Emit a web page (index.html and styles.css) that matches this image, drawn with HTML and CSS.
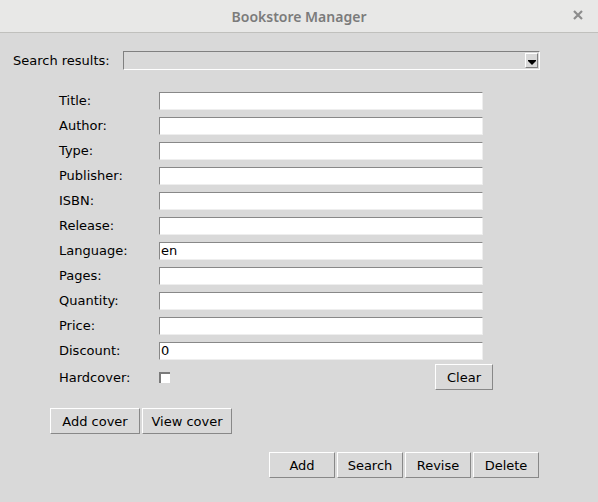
FILE: index.html
```html
<!DOCTYPE html>
<html lang="en">
<head>
  <meta charset="UTF-8" />
  <title>Bookstore Manager</title>
  <link rel="stylesheet" href="styles.css">
</head>
<body>

<div class="titlebar">
  <span class="title">Bookstore Manager</span>
  <svg class="close" width="12" height="12" viewBox="0 0 12 12">
    <path d="M2 2 L10 10 M10 2 L2 10" stroke="#8c8c8c" stroke-width="2.2" />
  </svg>
</div>

<div class="window">
  <div class="search-row">
    <span class="label">Search results:</span>
    <div class="combo">
      <div class="combo-btn"><span class="arrow"></span></div>
    </div>
  </div>

  <div class="form">
    <span class="label">Title:</span><input class="entry" type="text">
    <span class="label">Author:</span><input class="entry" type="text">
    <span class="label">Type:</span><input class="entry" type="text">
    <span class="label">Publisher:</span><input class="entry" type="text">
    <span class="label">ISBN:</span><input class="entry" type="text">
    <span class="label">Release:</span><input class="entry" type="text">
    <span class="label">Language:</span><input class="entry" type="text" value="en">
    <span class="label">Pages:</span><input class="entry" type="text">
    <span class="label">Quantity:</span><input class="entry" type="text">
    <span class="label">Price:</span><input class="entry" type="text">
    <span class="label">Discount:</span><input class="entry" type="text" value="0">
    <span class="label">Hardcover:</span>
    <div class="hard-row">
      <span class="check"></span>
      <button class="btn clear">Clear</button>
    </div>
  </div>

  <div class="cover-row">
    <button class="btn wide">Add cover</button>
    <button class="btn wide">View cover</button>
  </div>

  <div class="action-row">
    <button class="btn">Add</button>
    <button class="btn">Search</button>
    <button class="btn">Revise</button>
    <button class="btn">Delete</button>
  </div>
</div>

</body>
</html>
```

FILE: styles.css
```css
body {
  margin: 0;
  width: 598px;
  height: 502px;
  background: #d9d9d9;
  font-family: "DejaVu Sans", sans-serif;
  font-size: 13px;
  color: #000;
  overflow: hidden;
}

.titlebar {
  position: relative;
  height: 32px;
  background: #e8e8e7;
  border-bottom: 1px solid #c0c0bd;
  display: flex;
  align-items: center;
  justify-content: center;
}

.title {
  font-family: "Noto Sans", sans-serif;
  font-weight: 600;
  font-size: 14px;
  color: #7b7b7b;
}

.close {
  position: absolute;
  right: 14px;
  top: 9px;
}

.window {
  display: flex;
  flex-direction: column;
}

.search-row {
  display: flex;
  align-items: center;
  margin-top: 18px;
  padding-left: 13px;
}

.search-row .label {
  width: 110px;
}

.combo {
  width: 415px;
  height: 17px;
  border-top: 1px solid #808080;
  border-left: 1px solid #808080;
  border-bottom: 1px solid #ffffff;
  border-right: 1px solid #ffffff;
  display: flex;
  justify-content: flex-end;
  align-items: center;
}

.combo-btn {
  width: 11px;
  height: 13px;
  margin-right: 1px;
  border-top: 1px solid #ffffff;
  border-left: 1px solid #ffffff;
  border-bottom: 1px solid #808080;
  border-right: 1px solid #808080;
  display: flex;
  align-items: flex-end;
  justify-content: center;
}

.arrow {
  width: 0;
  height: 0;
  border-left: 4px solid transparent;
  border-right: 4px solid transparent;
  border-top: 4px solid #000;
  margin-bottom: 2px;
  box-shadow: 0 -1px 0 #000;
}

.form {
  display: grid;
  grid-template-columns: 100px 324px;
  grid-template-rows: repeat(11, 25px) 28px;
  align-items: center;
  margin-top: 18px;
  padding-left: 59px;
}

.entry {
  box-sizing: border-box;
  width: 324px;
  height: 18px;
  margin: 0;
  padding: 0 1px;
  background: #ffffff;
  border-top: 1px solid #888888;
  border-left: 1px solid #888888;
  border-bottom: 1px solid #eeeeee;
  border-right: 1px solid #eeeeee;
  font-family: "DejaVu Sans", sans-serif;
  font-size: 13px;
  outline: none;
}

.hard-row {
  display: flex;
  align-items: center;
  justify-content: space-between;
  width: 334px;
  height: 28px;
}

.check {
  box-sizing: border-box;
  width: 11px;
  height: 11px;
  background: #ffffff;
  border-top: 2px solid #7a7a7a;
  border-left: 2px solid #7a7a7a;
}

.btn {
  box-sizing: border-box;
  height: 26px;
  width: 66px;
  margin: 0;
  padding: 0;
  background: #d9d9d9;
  border-top: 1px solid #ffffff;
  border-left: 1px solid #ffffff;
  border-bottom: 1px solid #888888;
  border-right: 1px solid #888888;
  font-family: "DejaVu Sans", sans-serif;
  font-size: 13px;
  color: #000;
}

.clear {
  width: 58px;
}

.cover-row {
  display: flex;
  gap: 2px;
  margin-top: 17px;
  padding-left: 50px;
}

.wide {
  width: 90px;
}

.action-row {
  display: flex;
  gap: 2px;
  margin-top: 18px;
  padding-left: 269px;
}
```
